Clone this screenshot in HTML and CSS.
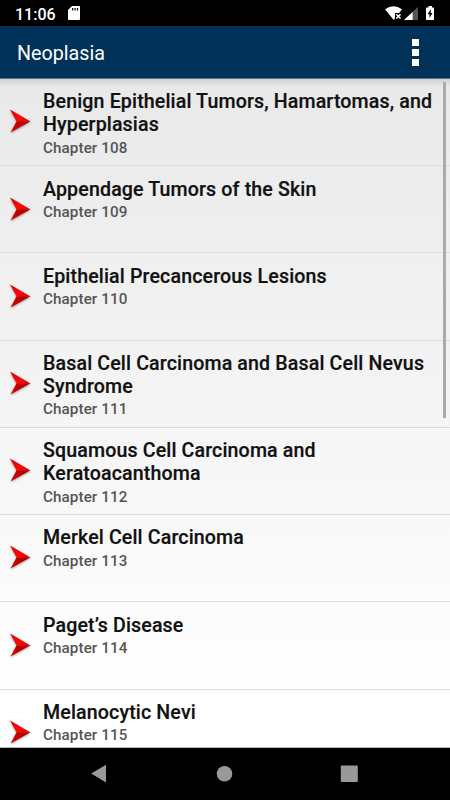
FILE: index.html
```html
<!DOCTYPE html>
<html lang="en">
<head>
    <meta charset="UTF-8">
    <meta name="viewport" content="width=device-width, initial-scale=1.0">
    <title>Neoplasia</title>
    <link rel="stylesheet" href="styles.css">
</head>
<body>
    <svg class="defs" width="0" height="0">
        <defs>
            <linearGradient id="redTop" x1="0" y1="0" x2="1" y2="1">
                <stop offset="0" stop-color="#d80000"/>
                <stop offset="0.6" stop-color="#ff0808"/>
                <stop offset="1" stop-color="#e00000"/>
            </linearGradient>
            <linearGradient id="redBottom" x1="0" y1="1" x2="1" y2="0">
                <stop offset="0" stop-color="#e00000"/>
                <stop offset="1" stop-color="#a80000"/>
            </linearGradient>
            <symbol id="arrow" viewBox="0 0 24 26">
                <path d="M1 0.6 L21.6 12.4 L7.6 12.4 Z" fill="url(#redTop)"/>
                <path d="M7.6 12.2 L21.6 12.2 L1.6 23.6 Z" fill="url(#redBottom)"/>
            </symbol>
        </defs>
    </svg>

    <div class="status-bar">
        <span class="time">11:06</span>
        <svg class="sd-icon" width="12" height="14" viewBox="0 0 12 14">
            <path d="M4 0H11Q12 0 12 1V13Q12 14 11 14H1Q0 14 0 13V4Z" fill="#fff"/>
            <path d="M4.7 2V4.4M7.1 2V4.4M9.5 2V4.4" stroke="#000" stroke-width="1.2"/>
        </svg>
        <svg class="signal-icons" width="50" height="16" viewBox="0 0 50 16">
            <path d="M0 3.2Q8.5 -2.8 17 3.2L14.2 7H10V12.3L8.7 14Z" fill="#fff"/>
            <path d="M11.3 8.3L15.5 12.5M15.5 8.3L11.3 12.5" stroke="#fff" stroke-width="1.6"/>
            <path d="M33 1V14H19Z" fill="#555"/>
            <path d="M27.6 6V14H19Z" fill="#fff"/>
            <path d="M43.5 0H47V1.4H48.2Q49 1.4 49 2.2V13.2Q49 14 48.2 14H41.8Q41 14 41 13.2V2.2Q41 1.4 41.8 1.4H43.5Z" fill="#fff"/>
            <path d="M45.8 3.3L42.6 8.3H44.5V12L47.5 7H45.8Z" fill="#000"/>
        </svg>
    </div>

    <header class="app-bar">
        <h1>Neoplasia</h1>
        <div class="menu">
            <span></span>
            <span></span>
            <span></span>
        </div>
    </header>

    <main class="list">
        <div class="item">
            <svg class="arrow"><use href="#arrow"/></svg>
            <div class="text">
                <h2>Benign Epithelial Tumors, Hamartomas, and Hyperplasias</h2>
                <p>Chapter 108</p>
            </div>
        </div>
        <div class="item">
            <svg class="arrow"><use href="#arrow"/></svg>
            <div class="text">
                <h2>Appendage Tumors of the Skin</h2>
                <p>Chapter 109</p>
            </div>
        </div>
        <div class="item">
            <svg class="arrow"><use href="#arrow"/></svg>
            <div class="text">
                <h2>Epithelial Precancerous Lesions</h2>
                <p>Chapter 110</p>
            </div>
        </div>
        <div class="item">
            <svg class="arrow"><use href="#arrow"/></svg>
            <div class="text">
                <h2>Basal Cell Carcinoma and Basal Cell Nevus Syndrome</h2>
                <p>Chapter 111</p>
            </div>
        </div>
        <div class="item">
            <svg class="arrow"><use href="#arrow"/></svg>
            <div class="text">
                <h2>Squamous Cell Carcinoma and Keratoacanthoma</h2>
                <p>Chapter 112</p>
            </div>
        </div>
        <div class="item">
            <svg class="arrow"><use href="#arrow"/></svg>
            <div class="text">
                <h2>Merkel Cell Carcinoma</h2>
                <p>Chapter 113</p>
            </div>
        </div>
        <div class="item">
            <svg class="arrow"><use href="#arrow"/></svg>
            <div class="text">
                <h2>Paget’s Disease</h2>
                <p>Chapter 114</p>
            </div>
        </div>
        <div class="item">
            <svg class="arrow"><use href="#arrow"/></svg>
            <div class="text">
                <h2>Melanocytic Nevi</h2>
                <p>Chapter 115</p>
            </div>
        </div>
        <div class="scrollbar"></div>
    </main>

    <nav class="nav-bar">
        <svg width="18" height="20" viewBox="0 0 18 20"><path d="M1.2 9.4L15.2 1.2Q16 .8 16 1.6V17.6Q16 18.6 15.2 18Z" fill="#999"/></svg>
        <svg width="18" height="20" viewBox="0 0 18 20"><circle cx="9.5" cy="9.7" r="7.8" fill="#999"/></svg>
        <svg width="18" height="20" viewBox="0 0 18 20"><rect x="0.8" y="1.4" width="17" height="16.6" rx="1" fill="#999"/></svg>
    </nav>
</body>
</html>
```

FILE: styles.css
```css
* {
    box-sizing: border-box;
}

body {
    font-family: Roboto, sans-serif;
    background-color: #000;
    margin: 0;
    width: 450px;
    height: 800px;
    display: flex;
    flex-direction: column;
    overflow: hidden;
}

h1, h2, p {
    margin: 0;
}

.defs {
    position: absolute;
}

.status-bar {
    height: 26px;
    flex: none;
    display: flex;
    align-items: flex-start;
    padding: 6px 15px 0 15px;
    color: #fff;
}

.time {
    font-size: 16px;
    font-weight: 500;
    line-height: 17px;
    width: 53px;
}

.signal-icons {
    margin-left: auto;
}

.app-bar {
    height: 53px;
    flex: none;
    display: flex;
    justify-content: space-between;
    align-items: center;
    padding: 0 31px 0 17px;
    background-color: #003259;
    border-bottom: 1px solid #5f7587;
    color: #fff;
}

.app-bar h1 {
    font-size: 19.7px;
    font-weight: 400;
    line-height: 24px;
    padding-top: 3px;
}

.menu {
    display: flex;
    flex-direction: column;
    gap: 3px;
    padding-top: 1px;
}

.menu span {
    width: 7px;
    height: 7px;
    background-color: #fff;
}

.list {
    flex: 1;
    min-height: 0;
    overflow: hidden;
    position: relative;
    background: linear-gradient(rgba(0, 0, 0, 0.1), rgba(0, 0, 0, 0) 8px), linear-gradient(#e9e9e9, #fff 94%);
    border-bottom: 1px solid #b4b8b8;
}

.item {
    height: 87.23px;
    display: flex;
    padding: 11.4px 0 0 9px;
    border-bottom: 1px solid #dcdcdc;
}

.arrow {
    width: 24px;
    height: 26px;
    flex: none;
    margin-top: 19px;
    filter: drop-shadow(0 1px 1px rgba(0, 0, 0, 0.35));
}

.text {
    padding-left: 10px;
    width: 405px;
}

.text h2 {
    font-size: 19.6px;
    font-weight: 500;
    letter-spacing: 0.14px;
    line-height: 23px;
    color: #111;
    -webkit-text-stroke: 0.2px #111;
}

.text p {
    font-size: 15.2px;
    font-weight: 500;
    letter-spacing: 0.1px;
    line-height: 18px;
    padding-top: 2.3px;
    color: #555;
}

.scrollbar {
    position: absolute;
    top: 3px;
    right: 4px;
    width: 3px;
    height: 336px;
    background-color: #aaa;
}

.nav-bar {
    height: 52px;
    flex: none;
    display: flex;
    justify-content: space-between;
    align-items: center;
    padding: 0 92px 0 90px;
}
```
